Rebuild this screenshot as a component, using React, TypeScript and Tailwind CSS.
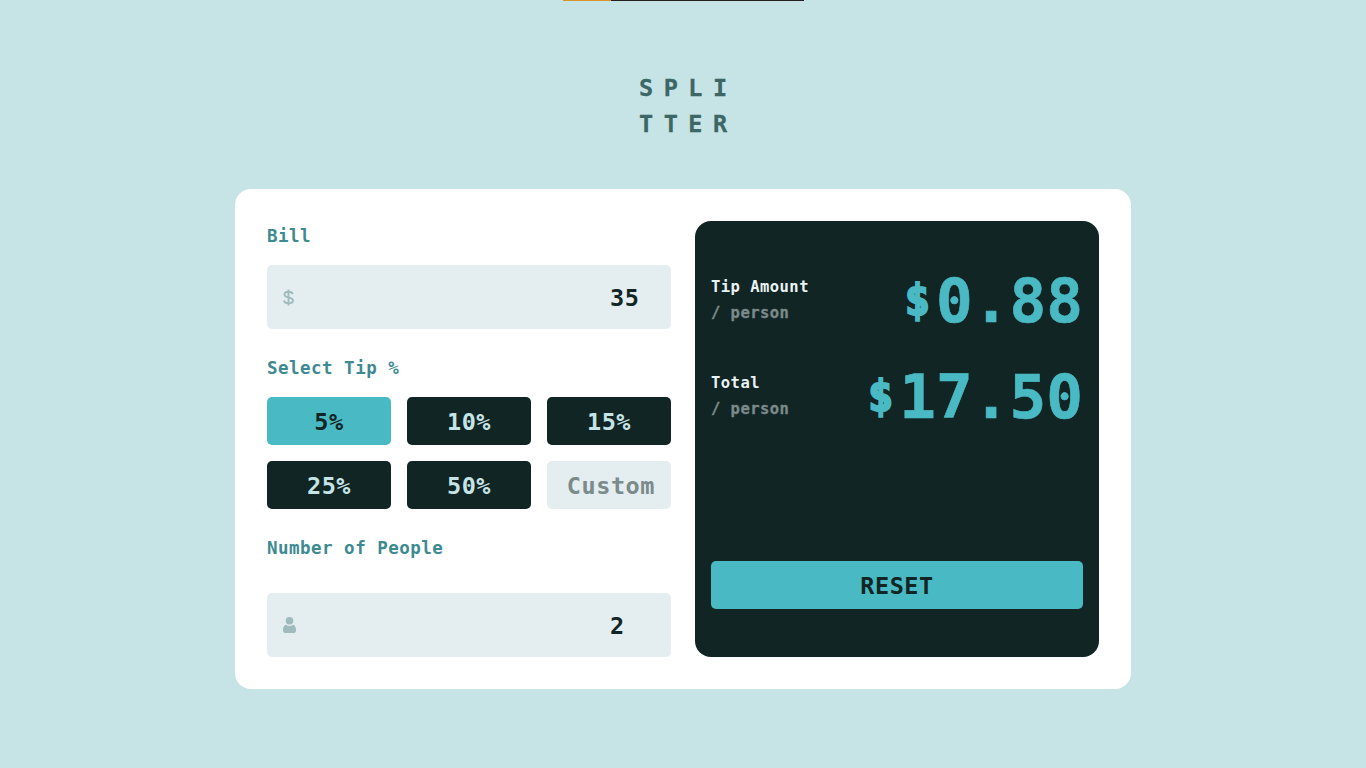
import type { ReactNode } from "react";

const tips = ["5%", "10%", "15%", "25%", "50%"];

function Label({ children }: { children: ReactNode }) {
  return (
    <div className="h-[27px] text-[17.5px] leading-[27px] tracking-[0.48px] whitespace-pre text-[#3d8a90]">
      {children}
    </div>
  );
}

function Field({ icon, value }: { icon: ReactNode; value: string }) {
  return (
    <div className="flex h-16 items-center justify-between rounded-[5px] bg-[#e4edf0] pl-4">
      {icon}
      <span className="w-[61px] pt-0.5 text-[23.5px] leading-9 tracking-[0.54px] text-[#112524]">
        {value}
      </span>
    </div>
  );
}

function Result({ title, amount }: { title: string; amount: string }) {
  return (
    <div className="flex h-24 items-start justify-between">
      <div className="pt-[5px] text-[15.5px] leading-[26px] tracking-[0.46px]">
        <div className="text-[#eaf3f5]">{title}</div>
        <div className="text-[#7b8a8a] [-webkit-text-stroke:0.3px_#7b8a8a]">/ person</div>
      </div>
      <div className="flex h-[62px] items-center pt-0.5 text-[#49bac4]">
        <span className="mr-[6px] text-[42px] leading-[60px] [-webkit-text-stroke:2px_#49bac4]">
          $
        </span>
        <span className="text-[61px] leading-[60px] [-webkit-text-stroke:0.6px_#49bac4]">
          {amount}
        </span>
      </div>
    </div>
  );
}

export default function App() {
  return (
    <div className="h-[768px] overflow-hidden bg-[#c6e4e6] font-['DejaVu_Sans_Mono',monospace] font-bold">
      <div className="ml-[563px] flex h-px w-[241px] bg-[#231f20]">
        <div className="w-12 bg-[#d8922b]" />
      </div>
      <h1 className="ml-[639px] pt-[69px] text-[23.5px] leading-9 tracking-[10.5px] text-[#3c6765] [-webkit-text-stroke:0.3px_#3c6765]">
        SPLI
        <br />
        TTER
      </h1>
      <main className="mx-auto mt-[47px] flex h-[500px] w-[896px] gap-6 rounded-2xl bg-white p-8">
        <section className="w-[404px]">
          <div className="pt-0.5">
            <Label>Bill</Label>
          </div>
          <div className="mt-[15px]">
            <Field
              value="35"
              icon={
                <svg width="11" height="17" viewBox="0 0 11 17" fill="none" stroke="#9ebbbd" strokeWidth="1.9">
                  <path d="M9.7 5.2C9.5 3.5 7.8 2.7 5.5 2.7S1.5 3.7 1.5 5.4C1.5 7.4 3.2 7.9 5.5 8.4S10 9.5 10 11.4C10 13.3 8.1 14.2 5.5 14.2S1.1 13.1 1 11.2M5.5 .6V16.4" />
                </svg>
              }
            />
          </div>
          <div className="mt-[26px]">
            <Label>Select Tip %</Label>
          </div>
          <div className="mt-[15px] grid grid-cols-3 gap-4 text-[23.5px] tracking-[0.54px]">
            {tips.map((tip, i) => (
              <button
                key={tip}
                className={
                  i === 0
                    ? "h-12 rounded-[5px] bg-[#49bac4] pt-1 text-[#112524]"
                    : "h-12 rounded-[5px] bg-[#112524] pt-1 text-[#c6e4e6]"
                }
              >
                {tip}
              </button>
            ))}
            <div className="flex h-12 items-center justify-end rounded-[5px] bg-[#e4edf0] pt-1 pr-4 text-[#7b8a8a]">
              Custom
            </div>
          </div>
          <div className="mt-[26px]">
            <Label>Number of People</Label>
          </div>
          <div className="mt-[31px]">
            <Field
              value="2"
              icon={
                <svg width="13" height="16" viewBox="0 0 13 16" fill="#9ebbbd">
                  <circle cx="6.5" cy="3.8" r="3.8" />
                  <path d="M3.1 7.7C4.1 8.5 5.2 8.9 6.5 8.9S8.9 8.5 9.9 7.7C12 8 13 10 13 13.2C13 15.1 12 16 10.2 16H2.8C1 16 0 15.1 0 13.2C0 10 1 8 3.1 7.7Z" />
                </svg>
              }
            />
          </div>
        </section>
        <section className="flex w-[404px] flex-col rounded-2xl bg-[#112524] px-4 pt-12 pb-12">
          <Result title="Tip Amount" amount="0.88" />
          <Result title="Total" amount="17.50" />
          <button className="mt-auto h-12 rounded-[5px] bg-[#49bac4] pt-1 text-[23.5px] tracking-[0.54px] text-[#112524]">
            RESET
          </button>
        </section>
      </main>
    </div>
  );
}
